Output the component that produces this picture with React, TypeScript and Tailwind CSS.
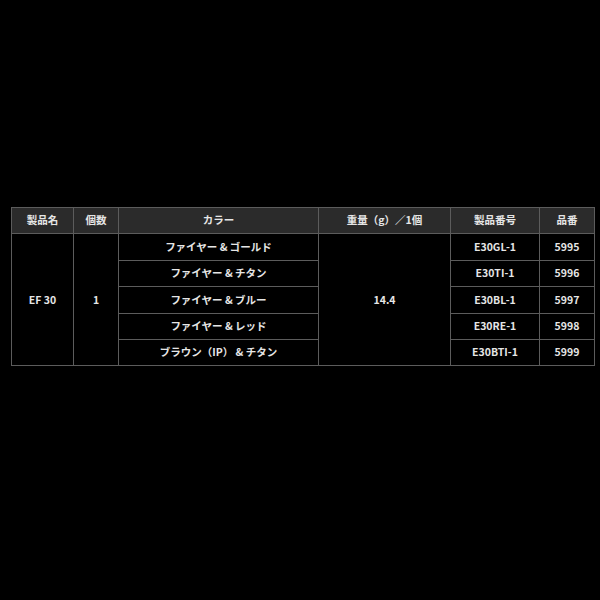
const rows = [
  { color: "ファイヤー & ゴールド", code: "E30GL-1", no: "5995" },
  { color: "ファイヤー & チタン", code: "E30TI-1", no: "5996" },
  { color: "ファイヤー & ブルー", code: "E30BL-1", no: "5997" },
  { color: "ファイヤー & レッド", code: "E30RE-1", no: "5998" },
  { color: "ブラウン（IP） & チタン", code: "E30BTI-1", no: "5999" },
];

const cell = "border border-[#5c5c5c] text-center align-middle h-[26.4px] p-0";

export default function App() {
  return (
    <div
      className="w-[600px] h-[600px] bg-black pt-[207px] pl-[11px]"
      style={{ fontFamily: '"Noto Sans CJK JP", "Noto Sans", sans-serif' }}
    >
      <table className="table-fixed border-collapse w-[583px] text-[10.5px] font-bold text-[#e6e6e6] leading-none">
        <colgroup>
          <col className="w-[62px]" />
          <col className="w-[45px]" />
          <col className="w-[200px]" />
          <col className="w-[132px]" />
          <col className="w-[89px]" />
          <col className="w-[55px]" />
        </colgroup>
        <thead>
          <tr className="bg-[#2b2b2b]">
            <th className={cell}>製品名</th>
            <th className={cell}>個数</th>
            <th className={cell}>カラー</th>
            <th className={cell}>重量（g）／1個</th>
            <th className={cell}>製品番号</th>
            <th className={cell}>品番</th>
          </tr>
        </thead>
        <tbody>
          {rows.map((r, i) => (
            <tr key={r.code}>
              {i === 0 && (
                <>
                  <td rowSpan={5} className={cell}>EF 30</td>
                  <td rowSpan={5} className={cell}>1</td>
                </>
              )}
              <td className={cell}>{r.color}</td>
              {i === 0 && <td rowSpan={5} className={cell}>14.4</td>}
              <td className={cell}>{r.code}</td>
              <td className={cell}>{r.no}</td>
            </tr>
          ))}
        </tbody>
      </table>
    </div>
  );
}
